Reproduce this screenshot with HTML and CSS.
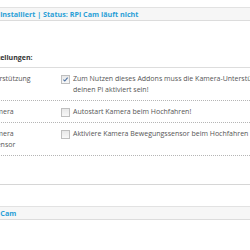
FILE: index.html
```html
<!DOCTYPE html>
<html lang="de">
<head>
<meta charset="utf-8">
<link rel="stylesheet" href="styles.css">
</head>
<body>
<div class="page">
  <div class="bar top-bar"><span class="bar-text first">RPi Cam installiert | Status: RPi Cam läuft nicht</span></div>
  <h3 class="heading">Einstellungen:</h3>
  <div class="settings">
    <div class="row">
      <div class="label">Kamera-Unterstützung</div>
      <div class="field">
        <span class="check checked"><svg viewBox="0 0 8 8" width="8" height="8"><path d="M1.6 4.2 L3.2 5.8 L6.4 1.8" fill="none" stroke="#4a6fa0" stroke-width="1.2"/></svg></span>
        <span class="desc">Zum Nutzen dieses Addons muss die Kamera-Unterstützung deinen Pi aktiviert sein!</span>
      </div>
    </div>
    <div class="row">
      <div class="label">Autostart Kamera</div>
      <div class="field">
        <span class="check"></span>
        <span class="desc">Autostart Kamera beim Hochfahren!</span>
      </div>
    </div>
    <div class="row">
      <div class="label">Autostart Kamera Bewegungssensor</div>
      <div class="field">
        <span class="check"></span>
        <span class="desc">Aktiviere Kamera Bewegungssensor beim Hochfahren</span>
      </div>
    </div>
  </div>
  <div class="footer-rule"></div>
  <div class="bar bottom-bar"><span class="bar-text second">RPi Cam</span></div>
</div>
</body>
</html>
```
FILE: styles.css
```css
html, body {
  margin: 0;
  padding: 0;
  background: #ffffff;
  overflow: hidden;
}
body {
  font-family: "Open Sans", "DejaVu Sans", sans-serif;
  font-size: 7px;
  color: #555555;
  width: 250px;
  height: 250px;
}
.page {
  margin-left: -44px;
  width: 294px;
}
.bar {
  background: #f6f6f6;
  border-top: 1px solid #e2e2e2;
  border-bottom: 1px solid #dcdcdc;
  height: 12px;
  line-height: 12px;
  white-space: nowrap;
  overflow: hidden;
}
.top-bar {
  margin-top: 7px;
}
.bar-text {
  color: #2a9fd6;
  font-weight: 700;
  font-size: 7.2px;
}
.bar-text.first {
  padding-left: 13px;
}
.bar-text.second {
  padding-left: 31px;
}
.heading {
  margin: 31px 0 0 27px;
  font-size: 7px;
  font-weight: 700;
  color: #333333;
  line-height: 11px;
  padding-bottom: 4px;
}
.settings {
  border-top: 1px solid #dddddd;
}
.row {
  display: grid;
  grid-template-columns: 105px 212px;
  padding: 5px 0 5px 0;
  border-bottom: 1px dotted #b5b5b5;
  line-height: 11px;
  overflow: hidden;
}
.label {
  padding-right: 25px;
  color: #555555;
}
.field {
  display: flex;
  align-items: flex-start;
  gap: 3px;
}
.check {
  flex: none;
  width: 7px;
  height: 7px;
  margin-top: 2px;
  border: 1px solid #bfbfbf;
  background: linear-gradient(#e8e8e8, #f8f8f8);
  display: flex;
}
.check svg {
  width: 7px;
  height: 7px;
}
.desc {
  flex: 1;
}
.footer-rule {
  margin-top: 28px;
  border-top: 1px solid #d6d6d6;
}
.bottom-bar {
  margin-top: 21px;
}
```
